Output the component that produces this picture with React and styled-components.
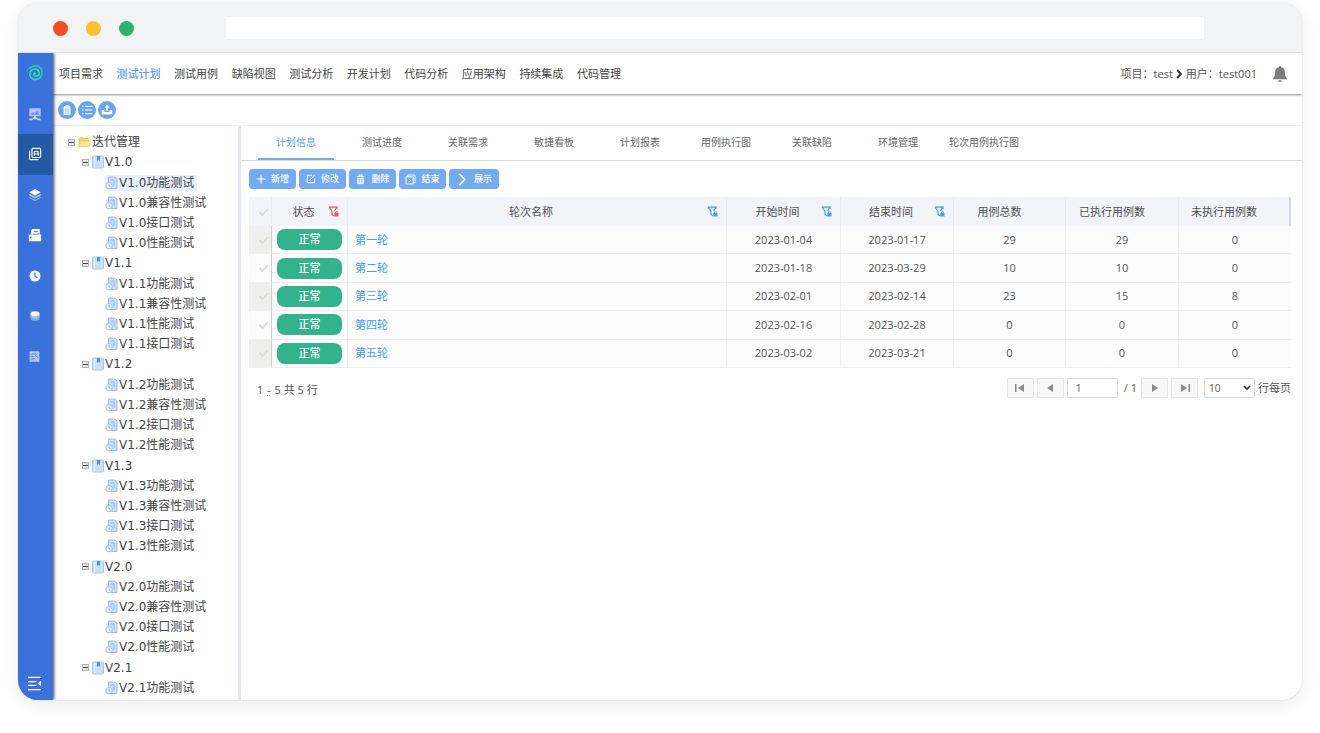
import React from "react";
import styled, { createGlobalStyle, css } from "styled-components";

const blue = "#3b71da";
const soft = "#74aaf0";

const GlobalStyle = createGlobalStyle`
  * { box-sizing: border-box; }
  body {
    margin: 0;
    background: #fff;
    color: #555;
    font-family: "Open Sans", "Noto Sans CJK SC", sans-serif;
    font-size: 11px;
    line-height: 16px;
  }
  button, input, select { font: inherit; color: inherit; }
  a { text-decoration: none; color: inherit; }
  ul { list-style: none; margin: 0; padding: 0; }
`;

const Window = styled.div`
  display: flex;
  flex-direction: column;
  min-height: calc(100vh - 36px);
  margin: 3px 18px 33px;
  border-radius: 20px;
  overflow: hidden;
  background: #fff;
  box-shadow: 0 4px 16px rgba(0, 0, 0, 0.09), 0 0 1px rgba(0, 0, 0, 0.25);
`;

const TitleBar = styled.header`
  position: relative;
  z-index: 2;
  display: flex;
  align-items: center;
  gap: 18px;
  height: 50px;
  padding: 1px 98px 0 35px;
  background: #f2f3f5;
  border-bottom: 1px solid #dfe1e5;
`;

const Dot = styled.span`
  width: 15px;
  height: 15px;
  border-radius: 50%;
  background: ${(p) => p.$color};
`;

const Address = styled.input`
  flex: 1;
  height: 22px;
  margin-left: 74px;
  padding: 0 8px;
  border: 0;
  background: #fff;
  outline: none;
`;

const Shell = styled.div`
  display: flex;
  flex: 1;
`;

const Sidebar = styled.aside`
  display: flex;
  flex-direction: column;
  justify-content: space-between;
  width: 35px;
  background: ${blue};
  box-shadow: 1px 0 3px rgba(0, 0, 0, 0.75);
  z-index: 1;
`;

const SideList = styled.nav`
  display: grid;
  grid-template-rows: repeat(8, 1fr);
  height: 324px;
`;

const SideButton = styled.button`
  display: flex;
  align-items: center;
  justify-content: center;
  padding: 0 2px 0 0;
  border: 0;
  color: #fff;
  background: ${(p) => (p.$active ? "#2459a5" : "transparent")};
  ${(p) => p.$foot && css`height: 34px;`}
`;

const Main = styled.main`
  display: flex;
  flex-direction: column;
  flex: 1;
  min-width: 0;
`;

const TopBar = styled.div`
  display: flex;
  align-items: center;
  justify-content: space-between;
  height: 41px;
  padding: 0 14px 0 6px;
  box-shadow: 0 1px 2px rgba(0, 0, 0, 0.45);
`;

const TopNav = styled.nav`
  display: flex;
  flex: 0 1 562px;
  justify-content: space-between;
  white-space: nowrap;
`;

const TopLink = styled.a`
  color: ${(p) => (p.$active ? "#5d9ff0" : "#444")};
  ${(p) => p.$active && css`font-weight: 500;`}
`;

const Account = styled.div`
  display: flex;
  align-items: center;
  gap: 3px;
  svg:last-child { margin-left: 12px; }
`;

const ToolBar = styled.div`
  display: flex;
  align-items: center;
  gap: 2px;
  height: 32px;
  padding: 1px 0 0 5px;
  border-bottom: 1px solid #f1f1f4;
`;

const RoundButton = styled.button`
  display: flex;
  align-items: center;
  justify-content: center;
  width: 18px;
  height: 18px;
  padding: 0;
  border: 0;
  border-radius: 50%;
  color: #fff;
  background: #6ba4ec;
`;

const Body = styled.div`
  display: flex;
  flex: 1;
`;

const Tree = styled.ul`
  display: grid;
  grid-auto-rows: 1fr;
  width: 188px;
  padding: 6px 0 2px 15px;
  border-right: 3px solid #e1e5f5;
  font-family: "DejaVu Sans", "Noto Sans CJK SC", sans-serif;
  font-size: 12px;
  color: #444;
`;

const TreeRow = styled.li`
  display: flex;
  align-items: center;
  min-height: 20px;
  padding-left: ${(p) => [0, 14, 37][p.$level]}px;
`;

const TreeLabel = styled.a`
  display: flex;
  align-items: center;
  gap: 1px;
  line-height: 16px;
  white-space: nowrap;
  ${(p) => p.$selected && css`background: #e5f0fc; padding-right: 3px;`}
`;

const Toggle = styled.button`
  display: flex;
  align-items: center;
  justify-content: center;
  width: 7px;
  height: 7px;
  margin-right: 3px;
  padding: 0;
  border: 1px solid #a9b4bd;
  background: #e6e6e6;
  &::before {
    content: "";
    width: 5px;
    height: 1px;
    background: #444;
  }
`;

const Panel = styled.section`
  flex: 1;
  min-width: 0;
`;

const Tabs = styled.div`
  display: flex;
  gap: 10px;
  padding-left: 17px;
  border-bottom: 1px solid #d9d9d9;
`;

const Tab = styled.button`
  width: 76px;
  height: 34px;
  padding: 0;
  border: 0;
  border-bottom: 2px solid ${(p) => (p.$active ? soft : "transparent")};
  background: none;
  font-size: 10px;
  white-space: nowrap;
  color: ${(p) => (p.$active ? "#5d9ff0" : "#666")};
`;

const Content = styled.div`
  padding: 8px 11px 0 8px;
`;

const Actions = styled.div`
  display: flex;
  gap: 3px;
  margin-bottom: 8px;
`;

const Action = styled.button`
  display: flex;
  align-items: center;
  justify-content: center;
  gap: 5px;
  width: ${(p) => (p.$wide ? 50 : 47)}px;
  height: 20px;
  padding: 0;
  border: 0;
  border-radius: 4px;
  background: ${soft};
  color: #fff;
  font-size: 9px;
  font-weight: 500;
`;

const Grid = styled.table`
  width: 100%;
  height: 171px;
  table-layout: fixed;
  border-collapse: separate;
  border-spacing: 0;
`;

const Head = styled.th`
  height: 29px;
  padding: ${(p) => (p.$plain ? "0 20px 0 0" : "0 8px 0 7px")};
  background: #f3f4f9;
  border-right: 1px solid #ebecf1;
  font-weight: 400;
  color: #505050;
  &:last-child { border-right: 2px solid #d9dbe2; }
`;

const CheckHead = styled(Head)`
  padding: 0;
`;

const HeadInner = styled.div`
  display: flex;
  align-items: center;
  span { flex: 1; text-align: center; }
`;

const Cell = styled.td`
  padding: 0 5px;
  background: #fcfcfc;
  border-right: 1px solid #f0f0f0;
  border-bottom: 1px solid #eee;
  text-align: center;
  &:last-child { border-right: 0; }
`;

const NameCell = styled(Cell)`
  padding-left: 7px;
  text-align: left;
`;

const CheckCell = styled.td`
  padding: 0;
  border-right: 1px solid #cfcfcf;
  border-bottom: 1px solid #f0f0f0;
  background: ${(p) => (p.$shade ? "#efefee" : "#fcfcfc")};
`;

const Check = styled.label`
  display: flex;
  justify-content: flex-end;
  padding-right: 2px;
  color: #d9d9d9;
  input { appearance: none; width: 0; height: 0; margin: 0; }
`;

const Status = styled.span`
  display: block;
  height: 21px;
  border-radius: 8px;
  background: #32b38c;
  color: #fff;
  font-weight: 500;
  line-height: 20px;
`;

const RoundLink = styled.a`
  color: #459ff5;
`;

const Footer = styled.div`
  display: flex;
  justify-content: space-between;
  padding: 10px 0 0 8px;
`;

const Summary = styled.span`
  padding-top: 4px;
  white-space: pre;
  abbr {
    padding: 0 1px;
    text-decoration: underline dotted #999;
  }
`;

const Pager = styled.div`
  display: flex;
  align-items: center;
  gap: 3px;
`;

const PageButton = styled.button`
  display: flex;
  align-items: center;
  justify-content: center;
  width: 27px;
  height: 20px;
  padding: 0;
  border: 1px solid #e6e6e6;
  background: #f7f7f7;
  color: #8a8a8a;
`;

const PageInput = styled.input`
  width: 51px;
  height: 20px;
  padding: 0 8px;
  border: 1px solid #dcdcdc;
  border-radius: 2px;
  font-size: 10px;
`;

const PageTotal = styled.span`
  padding: 0 1px 0 3px;
`;

const SelectWrap = styled.label`
  display: flex;
  align-items: center;
  gap: 3px;
  margin-left: 3px;
`;

const SelectBox = styled.span`
  display: grid;
  align-items: center;
  select, svg { grid-area: 1 / 1; }
  svg { justify-self: end; margin-right: 4px; pointer-events: none; }
`;

const PageSize = styled.select`
  appearance: none;
  width: 51px;
  height: 20px;
  padding: 0 4px;
  border: 1px solid #dcdcdc;
  border-radius: 2px;
  background: #fff;
  font-size: 10px;
`;

const Icon = ({ size = 14, children, fill = "none", ...rest }) => (
  <svg width={size} height={size} viewBox="0 0 16 16" fill={fill} stroke="currentColor" strokeWidth="1.3" aria-hidden="true" {...rest}>
    {children}
  </svg>
);

const Logo = () => (
  <svg width="18" height="18" viewBox="0 0 18 18" fill="none" strokeLinecap="round" aria-hidden="true">
    <path d="M4 4.500C7 .8 12.500.8 15 4.500c2.500 4 .8 8.500-3 10.500" stroke="#27d3a4" strokeWidth="1.500" />
    <path d="M12 15c-3.500 1.500-7.500 0-8.200-3.800C3.200 7.500 6 4.800 9.300 5c3 .2 4.500 2.800 3.900 5-.6 2-3 3-4.700 1.700-1.200-1-.8-2.600.6-2.700" stroke="#2be59b" strokeWidth="1.600" />
    <path d="M1 7.500C.8 5.800 2 4 4 3" stroke="#35a9cf" strokeWidth="1" />
  </svg>
);

const sideIcons = [
  ["首页", <Logo />],
  ["需求", (
    <Icon stroke="none" fill="#fff">
      <path d="M1.500 1.500h13v9h-13z" opacity=".6" />
      <path d="M3 8.800L5.500 6l2 1.800L10.500 4 13 8.800z" fill={blue} opacity=".6" />
      <path d="M6.800 10.500h2.400V13H6.800zM2 13h4l-1 2H1zM10 13h4l1 2h-4zM5.500 12h5v2h-5z" opacity=".8" />
    </Icon>
  )],
  ["计划", (
    <Icon>
      <rect x="4.500" y="1.500" width="10" height="10.500" rx="1.500" />
      <path d="M1.800 4v9a1.500 1.500 0 0 0 1.500 1.500H12M7.200 10V6.300A1.500 1.500 0 0 1 8.700 4.800h1.600a1.500 1.500 0 0 1 1.500 1.500V10M7.200 8h4.600" />
    </Icon>
  )],
  ["用例", (
    <Icon stroke="none">
      <path d="M8 1l6.500 3.800L8 8.600 1.500 4.800z" fill="#fff" />
      <path d="M1.500 6.500v2L8 12l6.500-3.500v-2L8 10z" fill="#fff" opacity=".65" />
      <path d="M1.500 10v1.500L8 15l6.500-3.500V10L8 13.500z" fill="#fff" opacity=".45" />
    </Icon>
  )],
  ["缺陷", (
    <Icon stroke="none">
      <path d="M5 1h8.500v6.500H15V15H1V7.500h2.500V2.500z" fill="#fff" />
      <path d="M6.500 4h5M5.500 7h6.500V5.500" stroke={blue} strokeWidth=".9" />
      <path d="M2.300 9.500l2 1.400-2 1.400z" fill={blue} />
    </Icon>
  )],
  ["时间", (
    <Icon stroke="none">
      <circle cx="8" cy="8" r="6.300" fill="#fff" />
      <path d="M8 4v4.500l3 1.500" stroke={blue} strokeWidth="1.300" />
    </Icon>
  )],
  ["数据", (
    <Icon stroke="none" size={12}>
      <path d="M2 5v6.500C3 15.500 13 15.500 14 11.500V5z" fill="#fff" opacity=".4" />
      <path d="M2 8.500c1 3 11 3 12 0V5H2z" fill="#fff" opacity=".3" />
      <ellipse cx="8" cy="5" rx="6" ry="3.300" fill="#fff" />
    </Icon>
  )],
  ["报表", (
    <Icon stroke="none" size={13}>
      <path d="M2 1.500h12v13H2z" fill="#fff" opacity=".6" />
      <path d="M4 5h7M4 8h3M9 7l3.500 2.500M4 11h4" stroke={blue} strokeWidth="1.100" />
    </Icon>
  )],
];

const FilterIcon = ({ color }) => (
  <svg width="11" height="11" viewBox="0 0 11 11" fill="none" stroke={color} strokeWidth="1.200" aria-hidden="true">
    <path d="M1 1.200h8L6.500 4.800M1 1.200l3 4V8.500l2 1.500M9 1.200v1.500" />
    <path d="M7.500 7.500V5.800h1.800v1.700" strokeWidth=".9" />
    <path d="M6.300 7h4.200v3.400H6.300z" fill={color} stroke="none" />
  </svg>
);

const TickIcon = () => (
  <svg width="11" height="10" viewBox="0 0 11 10" fill="none" stroke="currentColor" strokeWidth="1.800" aria-hidden="true">
    <path d="M1.500 5l3 3L9.800 2.200" />
  </svg>
);

const FolderIcon = () => (
  <svg width="13" height="12" viewBox="0 0 13 12" aria-hidden="true">
    <path d="M1 10V2.500l1-1h3l1 1h4.500V10z" fill="#f0d272" stroke="#dfbd55" strokeWidth=".6" />
    <path d="M1 10.500L2.200 5h10.300l-1.300 5.500z" fill="#fbe78f" stroke="#e3c464" strokeWidth=".6" />
  </svg>
);

const BookIcon = () => (
  <svg width="12" height="14" viewBox="0 0 12 14" aria-hidden="true">
    <rect x=".5" y="1" width="11" height="12" rx="1" fill="#c9e0fb" stroke="#a9c8ee" />
    <path d="M2.500 1.500v11" stroke="#e6f2ff" />
    <path d="M5 1h3v5L6.500 4.800 5 6z" fill="#5b90cc" />
  </svg>
);

const FileIcon = () => (
  <svg width="13" height="14" viewBox="0 0 13 14" aria-hidden="true">
    <path d="M3.500 1h6.300L12 3v9.500H3.500z" fill="#c9dffa" stroke="#94b9ea" strokeWidth=".9" />
    <path d="M5.500 4h3.500v5.500" stroke="#8fb4e4" strokeWidth=".9" fill="none" />
    <circle cx="4" cy="9.700" r="3.200" fill="#eef5fd" stroke="#9fbbe0" strokeWidth=".9" />
    <path d="M4 7.800v2.100l1.400.7" stroke="#86a8d6" strokeWidth=".8" fill="none" />
  </svg>
);

const actions = [
  ["新增", <Icon size={10}><path d="M8 1v14M1 8h14" strokeWidth="1.800" /></Icon>],
  ["修改", <Icon size={10}><path d="M10 2H2v12h12V7M6 10l8-8.500" strokeWidth="1.600" /></Icon>],
  ["删除", <Icon size={11}><path d="M2.500 4h11M6 3.500V1.500h4v2" strokeWidth="1.600" /><path d="M4 6.500h8V14H4z" fill="currentColor" fillOpacity=".5" strokeWidth="1.400" /><path d="M8 7v6" /></Icon>],
  ["结束", <Icon size={11}><path d="M4 4V1.500h10.500V12.500H12M1.500 4H12v10.500H1.500zM5.500 7l3 2.300-3 2.500" /></Icon>],
  ["展示", <Icon size={13}><path d="M4 1l7 7-7 7" strokeWidth="2" /></Icon>],
];

const topLinks = ["项目需求", "测试计划", "测试用例", "缺陷视图", "测试分析", "开发计划", "代码分析", "应用架构", "持续集成", "代码管理"];
const tabs = ["计划信息", "测试进度", "关联需求", "敏捷看板", "计划报表", "用例执行图", "关联缺陷", "环境管理", "轮次用例执行图"];

const versions = [
  ["V1.0", ["功能测试", "兼容性测试", "接口测试", "性能测试"]],
  ["V1.1", ["功能测试", "兼容性测试", "性能测试", "接口测试"]],
  ["V1.2", ["功能测试", "兼容性测试", "接口测试", "性能测试"]],
  ["V1.3", ["功能测试", "兼容性测试", "接口测试", "性能测试"]],
  ["V2.0", ["功能测试", "兼容性测试", "接口测试", "性能测试"]],
  ["V2.1", ["功能测试"]],
];

const rows = [
  ["第一轮", "2023-01-04", "2023-01-17", 29, 29, 0],
  ["第二轮", "2023-01-18", "2023-03-29", 10, 10, 0],
  ["第三轮", "2023-02-01", "2023-02-14", 23, 15, 8],
  ["第四轮", "2023-02-16", "2023-02-28", 0, 0, 0],
  ["第五轮", "2023-03-02", "2023-03-21", 0, 0, 0],
];

const columns = [
  ["状态", "#f25555"],
  ["轮次名称", "#3f9ffb"],
  ["开始时间", "#3f9ffb"],
  ["结束时间", "#3f9ffb"],
  ["用例总数"],
  ["已执行用例数"],
  ["未执行用例数"],
];

const widths = [23, 76, null, 114, 113, 112, 113, 112];

function VersionTree() {
  return (
    <Tree role="tree" aria-label="迭代管理">
      <TreeRow role="treeitem" aria-level={1} $level={0}>
        <Toggle aria-label="折叠" />
        <TreeLabel href="#root"><FolderIcon />迭代管理</TreeLabel>
      </TreeRow>
      {versions.map(([version, items]) => (
        <React.Fragment key={version}>
          <TreeRow role="treeitem" aria-level={2} $level={1}>
            <Toggle aria-label="折叠" />
            <TreeLabel href={`#${version}`}><BookIcon />{version}</TreeLabel>
          </TreeRow>
          {items.map((item) => (
            <TreeRow key={item} role="treeitem" aria-level={3} $level={2}>
              <TreeLabel href={`#${version}`} $selected={version === "V1.0" && item === "功能测试"}>
                <FileIcon />{version + item}
              </TreeLabel>
            </TreeRow>
          ))}
        </React.Fragment>
      ))}
    </Tree>
  );
}

function RoundsTable() {
  return (
    <Grid>
      <colgroup>
        {widths.map((w, i) => <col key={i} width={w || undefined} />)}
      </colgroup>
      <thead>
        <tr>
          <CheckHead>
            <Check aria-label="全选"><input type="checkbox" /><TickIcon /></Check>
          </CheckHead>
          {columns.map(([title, color]) => (
            <Head key={title} $plain={!color}>
              <HeadInner><span>{title}</span>{color && <FilterIcon color={color} />}</HeadInner>
            </Head>
          ))}
        </tr>
      </thead>
      <tbody>
        {rows.map(([name, ...values], i) => (
          <tr key={name}>
            <CheckCell $shade={i % 2 === 0}>
              <Check aria-label={name}><input type="checkbox" /><TickIcon /></Check>
            </CheckCell>
            <Cell><Status>正常</Status></Cell>
            <NameCell><RoundLink href="#round">{name}</RoundLink></NameCell>
            {values.map((v, j) => <Cell key={j}>{v}</Cell>)}
          </tr>
        ))}
      </tbody>
    </Grid>
  );
}

const PageIcon = ({ d, bar }) => (
  <svg width="12" height="10" viewBox="0 0 12 10" fill="currentColor" aria-hidden="true">
    <path d={d} />
    {bar && <path d={bar} />}
  </svg>
);

export default function App() {
  return (
    <>
      <GlobalStyle />
      <Window>
        <TitleBar>
          <Dot $color="#f04e23" />
          <Dot $color="#fdbf2d" />
          <Dot $color="#2fb170" />
          <Address aria-label="地址" />
        </TitleBar>
        <Shell>
          <Sidebar>
            <SideList>
              {sideIcons.map(([label, icon], i) => (
                <SideButton key={label} aria-label={label} $active={i === 2}>{icon}</SideButton>
              ))}
            </SideList>
            <SideButton aria-label="收起菜单" $foot>
              <Icon size={15}>
                <path d="M1 1.500h14M1 6h9M1 10h9M1 14.500h14" strokeWidth="1.500" />
                <path d="M15 5v6l-3.500-3z" fill="#fff" stroke="none" />
              </Icon>
            </SideButton>
          </Sidebar>
          <Main>
            <TopBar>
              <TopNav>
                {topLinks.map((t, i) => <TopLink key={t} href="#nav" $active={i === 1}>{t}</TopLink>)}
              </TopNav>
              <Account>
                <span>项目：test</span>
                <svg width="7" height="10" viewBox="0 0 7 10" fill="none" stroke="#333" strokeWidth="2" aria-hidden="true"><path d="M1.200 1l3.600 4-3.600 4" /></svg>
                <span>用户：test001</span>
                <svg width="16" height="18" viewBox="0 0 16 18" fill="#7d7d7d" aria-hidden="true">
                  <path d="M8 1a1.300 1.300 0 0 1 1.300 1.300C12 3 13 5 13 7.500c0 3.500.8 4.700 2 6v.8H1v-.8c1.200-1.300 2-2.500 2-6C3 5 4 3 6.700 2.300A1.300 1.300 0 0 1 8 1zM6.200 15.300h3.600a1.800 1.800 0 0 1-3.600 0z" />
                </svg>
              </Account>
            </TopBar>
            <ToolBar>
              <RoundButton aria-label="删除">
                <Icon size={12}><path d="M4 4.500V14h8V4.500zM4 3.500h8M6 2h4" fill="currentColor" fillOpacity=".6" /></Icon>
              </RoundButton>
              <RoundButton aria-label="列表">
                <Icon size={12}><path d="M1.500 3h2M5.500 3H15M1.500 8h2M5.500 8H15M1.500 13h2M5.500 13H15" strokeWidth="1.600" /></Icon>
              </RoundButton>
              <RoundButton aria-label="导出">
                <Icon size={12}>
                  <path d="M8 1l3.500 4H9.500v4h-3V5H4.500z" fill="currentColor" stroke="none" />
                  <path d="M1 8h3l1 2.500h6L12 8h3v6H1z" fill="currentColor" stroke="none" />
                </Icon>
              </RoundButton>
            </ToolBar>
            <Body>
              <VersionTree />
              <Panel>
                <Tabs role="tablist">
                  {tabs.map((t, i) => <Tab key={t} role="tab" aria-selected={i === 0} $active={i === 0}>{t}</Tab>)}
                </Tabs>
                <Content>
                  <Actions>
                    {actions.map(([label, icon], i) => <Action key={label} $wide={i === 4}>{icon}{label}</Action>)}
                  </Actions>
                  <RoundsTable />
                  <Footer>
                    <Summary>1 <abbr title="至">-</abbr> 5 共 5 行</Summary>
                    <Pager>
                      <PageButton aria-label="首页"><PageIcon d="M10 1v8L4 5z" bar="M1 1h1.500v8H1z" /></PageButton>
                      <PageButton aria-label="上一页"><PageIcon d="M9 1v8L3 5z" /></PageButton>
                      <PageInput aria-label="页码" defaultValue="1" />
                      <PageTotal>/ 1</PageTotal>
                      <PageButton aria-label="下一页"><PageIcon d="M3 1v8l6-4z" /></PageButton>
                      <PageButton aria-label="末页"><PageIcon d="M2 1v8l6-4z" bar="M9.500 1H11v8H9.500z" /></PageButton>
                      <SelectWrap>
                        <SelectBox>
                          <PageSize defaultValue="10"><option>10</option><option>20</option><option>50</option></PageSize>
                          <svg width="8" height="6" viewBox="0 0 8 6" fill="none" stroke="#333" strokeWidth="1.600" aria-hidden="true"><path d="M1 1l3 3 3-3" /></svg>
                        </SelectBox>
                        行每页
                      </SelectWrap>
                    </Pager>
                  </Footer>
                </Content>
              </Panel>
            </Body>
          </Main>
        </Shell>
      </Window>
    </>
  );
}
